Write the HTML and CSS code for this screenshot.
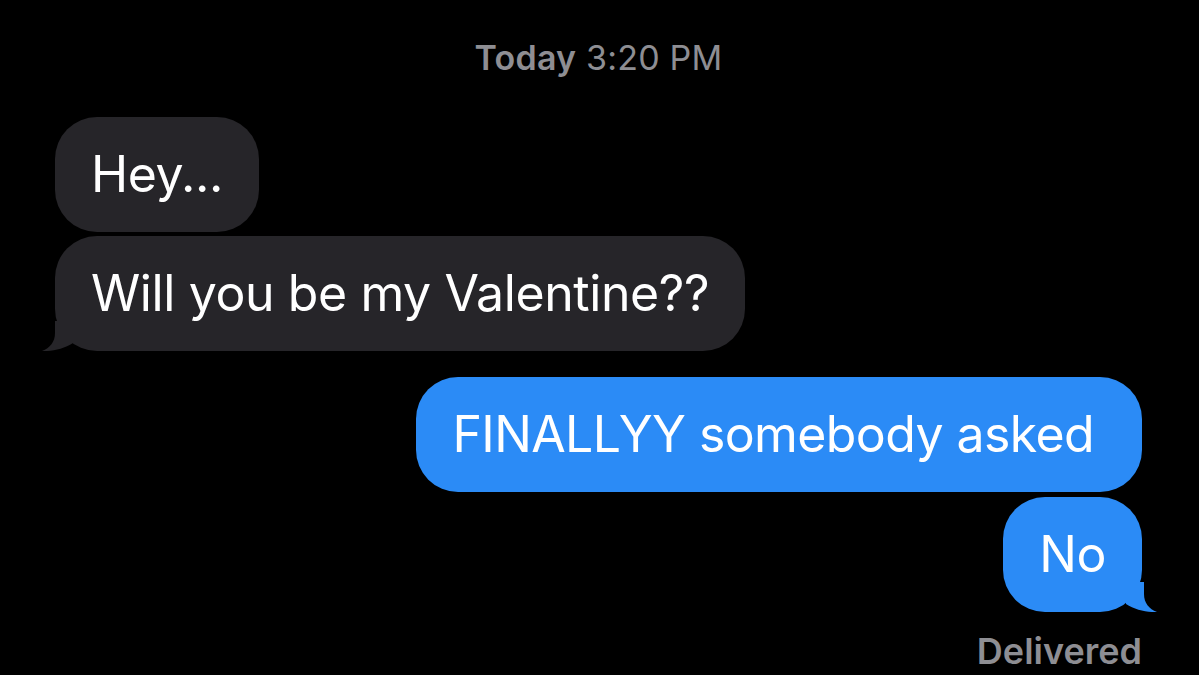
FILE: index.html
```html
<!DOCTYPE html>
<html lang="en">

<head>
    <meta charset="UTF-8">
    <meta name="viewport" content="width=device-width, initial-scale=1.0">
    <title>Messages</title>
    <link rel="stylesheet" href="styles.css">
</head>

<body>
    <main class="thread">
        <div class="stamp"><b>Today</b> 3:20 PM</div>

        <div class="msg in first">Hey...</div>
        <div class="msg in">Will you be my Valentine??
            <svg class="tail" viewBox="0 0 40 30" width="40" height="30">
                <path d="M13 0 L13 12 C13 21 8 27 0 30 C10 30.5 22 28 31 22 L31 0 Z" />
            </svg>
        </div>

        <div class="msg out first wide">FINALLYY somebody asked</div>
        <div class="msg out">No
            <svg class="tail" viewBox="0 0 40 30" width="40" height="30">
                <path d="M13 0 L13 12 C13 21 8 27 0 30 C10 30.5 22 28 31 22 L31 0 Z" />
            </svg>
        </div>

        <div class="status">Delivered</div>
    </main>
</body>

</html>
```

FILE: styles.css
```css
* {
    margin: 0;
    padding: 0;
    box-sizing: border-box;
}

body {
    background-color: #000;
    width: 100%;
    height: 100vh;
    overflow: hidden;
    font-family: Inter, "Liberation Sans", sans-serif;
}

.thread {
    display: flex;
    flex-direction: column;
    padding: 0 57px 0 55px;
}

.stamp {
    align-self: center;
    margin-top: 38px;
    font-size: 34px;
    line-height: 40px;
    letter-spacing: 0.2px;
    color: #8e8e93;
}

.stamp b {
    font-weight: 600;
}

.msg {
    position: relative;
    font-size: 50px;
    line-height: 61px;
    letter-spacing: -0.4px;
    padding: 27px 36px;
    border-radius: 42px;
    color: #fff;
}

.msg.in {
    align-self: flex-start;
    background-color: #262529;
    fill: #262529;
    margin-top: 4px;
}

.msg.in.first {
    margin-top: 39px;
}

.msg.out {
    align-self: flex-end;
    background-color: #2b8bf6;
    fill: #2b8bf6;
    margin-top: 5px;
}

.msg.out.first {
    margin-top: 26px;
}

/* long bubble carries a little extra room on the right */
.msg.wide {
    letter-spacing: -0.6px;
    padding-right: 48px;
}

.tail {
    position: absolute;
    bottom: 0;
}

.in .tail {
    left: -13px;
}

.out .tail {
    right: -15px;
    transform: scaleX(-1);
}

.status {
    align-self: flex-end;
    margin-top: 19px;
    font-size: 36px;
    line-height: 40px;
    font-weight: 600;
    color: #8e8e93;
}
```
